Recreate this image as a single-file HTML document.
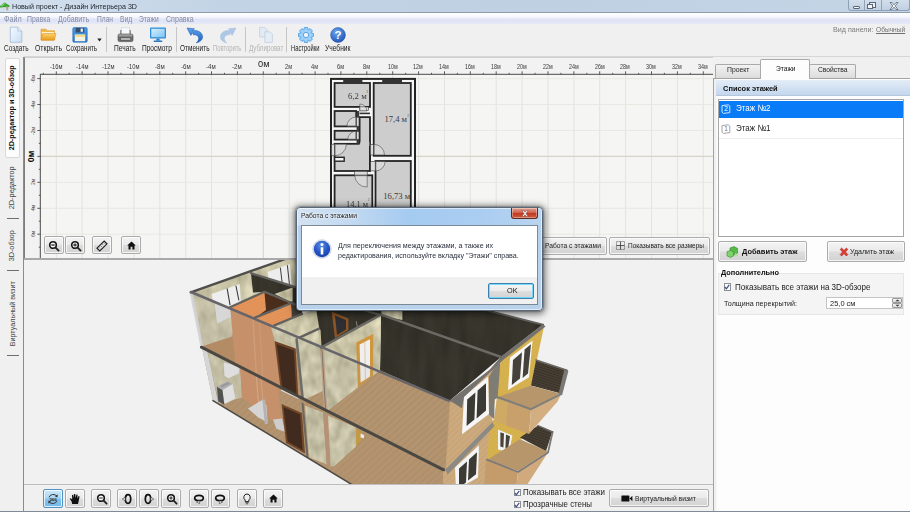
<!DOCTYPE html>
<html lang="ru">
<head>
<meta charset="utf-8">
<title>Новый проект - Дизайн Интерьера 3D</title>
<style>
*{box-sizing:border-box;margin:0;padding:0}
html,body{width:910px;height:512px;overflow:hidden;background:#f0f0f0}
body{font-family:"Liberation Sans",sans-serif;font-size:8px;color:#222;position:relative}
.abs{position:absolute}
.t{position:absolute;white-space:nowrap;transform-origin:0 50%}
#title{left:0;top:0;width:910px;height:12px;background:linear-gradient(90deg,#d3e0ee 0,#c2d3e5 25%,#bed0e2 60%,#c4d5e6 100%)}
#titleline{left:0;top:12px;width:910px;height:1px;background:#8e9cab}
#menu{left:0;top:13px;width:910px;height:11px;background:linear-gradient(180deg,#ffffff 0,#f6f7fd 35%,#dfe3f6 60%,#e4e8f7 100%)}
#toolbar{left:0;top:24px;width:910px;height:32px;background:#f0f0f0}
.btn{position:absolute;border:1px solid #ababab;border-radius:2px;background:linear-gradient(180deg,#f3f3f3 0,#eaeaea 48%,#dddddd 52%,#d2d2d2 100%);box-shadow:inset 0 0 0 1px rgba(255,255,255,.75)}
</style>
</head>
<body>
<div class="abs" id="title"></div>
<div class="abs" id="titleline"></div>
<div class="abs" id="menu"></div>
<div class="abs" id="toolbar"></div>
<!-- ===== ui_top ===== -->
<svg class="abs" style="left:0;top:0.9px" width="12" height="12" viewBox="0 0 12 12"><path d="M0 5 L4.5 1.5 L9.5 4.5 L9.5 6 L0 6.5Z" fill="#3fa535"/><path d="M1 4.6 L4.6 2 L4.6 3.2 L1.6 5.4Z" fill="#8fe070"/><rect x="6.2" y="5.5" width="2" height="3.8" fill="#b8a48c"/><rect x="3" y="6" width="1.4" height="2.4" fill="#d8d0c0"/></svg>
<span class="t" style="left:11.80px;top:2.90px;font-family:'Liberation Sans',sans-serif;font-size:7.4px;font-weight:normal;font-style:normal;color:#1b1f26;line-height:7.4px;transform:scaleX(0.9618);">Новый проект - Дизайн Интерьера 3D</span>
<div class="abs" style="left:847.50px;top:0.00px;width:62.50px;height:10.60px;border:1px solid #8fa0b4;border-top:none;border-radius:0 0 3px 3px;background:linear-gradient(180deg,#d2deeb,#c0d0e2)"></div>
<div class="abs" style="left:864.00px;top:0.00px;width:1.00px;height:10.00px;background:#93a3b6"></div>
<div class="abs" style="left:881.00px;top:0.00px;width:1.00px;height:10.00px;background:#93a3b6"></div>
<div class="abs" style="left:852.50px;top:6.00px;width:7.50px;height:2.60px;border:1px solid #5a6675;background:#f4f7fa;border-radius:1px"></div>
<div class="abs" style="left:868.50px;top:2.30px;width:7.00px;height:5.60px;border:1px solid #5a6675;background:#eef2f6"></div>
<div class="abs" style="left:867.20px;top:3.60px;width:6.00px;height:5.00px;border:1px solid #5a6675;background:#f4f7fa"></div>
<svg class="abs" style="left:889px;top:1.5px" width="10" height="8" viewBox="0 0 10 8"><path d="M1 0.5 L3 0.5 L5 2.8 L7 0.5 L9 0.5 L6.2 4 L9 7.5 L7 7.5 L5 5.2 L3 7.5 L1 7.5 L3.8 4Z" fill="#f2f5f8" stroke="#5a6675" stroke-width="0.8"/></svg>
<span class="t" style="left:3.80px;top:14.65px;font-family:'Liberation Sans',sans-serif;font-size:8.3px;font-weight:normal;font-style:normal;color:#838aa3;line-height:8.3px;transform:scaleX(0.8674);">Файл</span>
<span class="t" style="left:27.30px;top:14.65px;font-family:'Liberation Sans',sans-serif;font-size:8.3px;font-weight:normal;font-style:normal;color:#838aa3;line-height:8.3px;transform:scaleX(0.8276);">Правка</span>
<span class="t" style="left:58.00px;top:14.65px;font-family:'Liberation Sans',sans-serif;font-size:8.3px;font-weight:normal;font-style:normal;color:#838aa3;line-height:8.3px;transform:scaleX(0.8508);">Добавить</span>
<span class="t" style="left:96.50px;top:14.65px;font-family:'Liberation Sans',sans-serif;font-size:8.3px;font-weight:normal;font-style:normal;color:#838aa3;line-height:8.3px;transform:scaleX(0.7994);">План</span>
<span class="t" style="left:120.00px;top:14.65px;font-family:'Liberation Sans',sans-serif;font-size:8.3px;font-weight:normal;font-style:normal;color:#838aa3;line-height:8.3px;transform:scaleX(0.8125);">Вид</span>
<span class="t" style="left:139.00px;top:14.65px;font-family:'Liberation Sans',sans-serif;font-size:8.3px;font-weight:normal;font-style:normal;color:#838aa3;line-height:8.3px;transform:scaleX(0.8046);">Этажи</span>
<span class="t" style="left:165.50px;top:14.65px;font-family:'Liberation Sans',sans-serif;font-size:8.3px;font-weight:normal;font-style:normal;color:#838aa3;line-height:8.3px;transform:scaleX(0.8537);">Справка</span>
<span class="t" style="left:3.80px;top:44.15px;font-family:'Liberation Sans',sans-serif;font-size:8.5px;font-weight:normal;font-style:normal;color:#1c1c1c;line-height:8.5px;transform:scaleX(0.7644);">Создать</span>
<span class="t" style="left:35.00px;top:44.15px;font-family:'Liberation Sans',sans-serif;font-size:8.5px;font-weight:normal;font-style:normal;color:#1c1c1c;line-height:8.5px;transform:scaleX(0.8086);">Открыть</span>
<span class="t" style="left:66.00px;top:44.15px;font-family:'Liberation Sans',sans-serif;font-size:8.5px;font-weight:normal;font-style:normal;color:#1c1c1c;line-height:8.5px;transform:scaleX(0.7337);">Сохранить</span>
<span class="t" style="left:114.30px;top:44.15px;font-family:'Liberation Sans',sans-serif;font-size:8.5px;font-weight:normal;font-style:normal;color:#1c1c1c;line-height:8.5px;transform:scaleX(0.7789);">Печать</span>
<span class="t" style="left:142.00px;top:44.15px;font-family:'Liberation Sans',sans-serif;font-size:8.5px;font-weight:normal;font-style:normal;color:#1c1c1c;line-height:8.5px;transform:scaleX(0.7726);">Просмотр</span>
<span class="t" style="left:179.50px;top:44.15px;font-family:'Liberation Sans',sans-serif;font-size:8.5px;font-weight:normal;font-style:normal;color:#1c1c1c;line-height:8.5px;transform:scaleX(0.7595);">Отменить</span>
<span class="t" style="left:213.00px;top:44.15px;font-family:'Liberation Sans',sans-serif;font-size:8.5px;font-weight:normal;font-style:normal;color:#b4b4b4;line-height:8.5px;transform:scaleX(0.6843);">Повторить</span>
<span class="t" style="left:248.70px;top:44.15px;font-family:'Liberation Sans',sans-serif;font-size:8.5px;font-weight:normal;font-style:normal;color:#b4b4b4;line-height:8.5px;transform:scaleX(0.7330);">Дублироват</span>
<span class="t" style="left:291.00px;top:44.15px;font-family:'Liberation Sans',sans-serif;font-size:8.5px;font-weight:normal;font-style:normal;color:#1c1c1c;line-height:8.5px;transform:scaleX(0.6837);">Настройки</span>
<span class="t" style="left:324.50px;top:44.15px;font-family:'Liberation Sans',sans-serif;font-size:8.5px;font-weight:normal;font-style:normal;color:#1c1c1c;line-height:8.5px;transform:scaleX(0.7846);">Учебник</span>
<div class="abs" style="left:105.50px;top:27.00px;width:1.00px;height:25.00px;background:#c6c6c6"></div>
<div class="abs" style="left:175.50px;top:27.00px;width:1.00px;height:25.00px;background:#c6c6c6"></div>
<div class="abs" style="left:245.20px;top:27.00px;width:1.00px;height:25.00px;background:#c6c6c6"></div>
<div class="abs" style="left:286.10px;top:27.00px;width:1.00px;height:25.00px;background:#c6c6c6"></div>
<svg class="abs" style="left:97px;top:37.5px" width="5" height="4" viewBox="0 0 5 4"><path d="M0.3 0.5 L4.7 0.5 L2.5 3.5Z" fill="#222"/></svg>
<svg class="abs" style="left:8px;top:26px" width="16" height="18" viewBox="0 0 16 18"><defs><linearGradient id="gdoc" x1="0" y1="0" x2="1" y2="1"><stop offset="0" stop-color="#f4f9ff"/><stop offset="1" stop-color="#c9def5"/></linearGradient></defs><path d="M2.3 1.2 L9.8 1.2 L13.8 5 L13.8 16.3 L2.3 16.3Z" fill="url(#gdoc)" stroke="#a9c0dc" stroke-width="0.9"/><path d="M9.8 1.2 L9.8 5 L13.8 5" fill="#e6f0fb" stroke="#a9c0dc" stroke-width="0.8"/></svg>
<svg class="abs" style="left:40px;top:28px" width="17" height="14" viewBox="0 0 17 14"><defs><linearGradient id="gfol" x1="0" y1="0" x2="0" y2="1"><stop offset="0" stop-color="#fbd36a"/><stop offset="1" stop-color="#e99a1c"/></linearGradient></defs><path d="M1 1.2 L6 1.2 L7.3 2.8 L14.5 2.8 L14.5 12 L1 12Z" fill="#f3b948" stroke="#d9992a" stroke-width="0.6"/><path d="M1.8 4 L14 4 L14 6 L1.8 6Z" fill="#fdf3d2"/><path d="M2.8 5.5 L16 5.5 L14.3 12.2 L1 12.2Z" fill="url(#gfol)" stroke="#d48a1a" stroke-width="0.5"/></svg>
<svg class="abs" style="left:72px;top:27px" width="16" height="16" viewBox="0 0 16 16"><defs><linearGradient id="gfl" x1="0" y1="0" x2="0" y2="1"><stop offset="0" stop-color="#4b9de8"/><stop offset="1" stop-color="#2a78cc"/></linearGradient></defs><rect x="0.8" y="0.6" width="14.4" height="14.6" rx="1.2" fill="url(#gfl)" stroke="#2668b4" stroke-width="0.6"/><rect x="3.6" y="0.9" width="8.6" height="4.6" fill="#3a4e6c"/><rect x="8.6" y="1.5" width="2.3" height="3.3" fill="#e8eef6"/><rect x="2.8" y="7.6" width="10.4" height="6.6" fill="#f4f2e4"/><rect x="2.8" y="7.6" width="10.4" height="2.4" fill="#f6dc8a"/></svg>
<svg class="abs" style="left:117px;top:27px" width="17" height="16" viewBox="0 0 17 16"><rect x="4.6" y="0.8" width="7.8" height="7" fill="#f6f9fd" stroke="#c9d3df" stroke-width="0.6"/><rect x="3.4" y="3" width="0.9" height="4.4" fill="#5a5a5a"/><rect x="12.7" y="3" width="0.9" height="4.4" fill="#5a5a5a"/><rect x="1" y="7" width="15" height="7.6" rx="1.6" fill="#6d6d6d" stroke="#4a4a4a" stroke-width="0.6"/><rect x="1.4" y="7.3" width="14.2" height="2.2" rx="1" fill="#9c9c9c"/><rect x="3.6" y="11" width="9.8" height="2" fill="#d8d8d8" stroke="#444" stroke-width="0.5"/></svg>
<svg class="abs" style="left:149px;top:27px" width="18" height="16" viewBox="0 0 18 16"><defs><linearGradient id="gmon" x1="0" y1="0" x2="1" y2="1"><stop offset="0" stop-color="#d6efff"/><stop offset="1" stop-color="#7cc4f2"/></linearGradient></defs><rect x="1" y="0.6" width="16" height="11" rx="1" fill="#2f8fd8"/><rect x="2.3" y="1.8" width="13.4" height="8.4" fill="url(#gmon)"/><rect x="7.4" y="11.6" width="3.2" height="2" fill="#2a7fc6"/><rect x="4.6" y="13.4" width="8.8" height="1.5" rx="0.7" fill="#2878be"/></svg>
<svg class="abs" style="left:186px;top:27px" width="18" height="17" viewBox="0 0 18 17"><defs><linearGradient id="gun" x1="0" y1="0" x2="0" y2="1"><stop offset="0" stop-color="#5aa4ee"/><stop offset="1" stop-color="#1c5fc0"/></linearGradient></defs><path d="M1 1 L8.6 1.8 L6.4 3.6 C12 2.6 16.4 5.6 16.6 9.6 C16.8 12.6 14 15.4 10.2 15.8 C13 13.4 13.4 10.6 11.6 9 C10.2 7.8 8.6 7.6 7.4 8 L7 5.6 L4.8 8.4Z" fill="url(#gun)" stroke="#1d57ad" stroke-width="0.5"/></svg>
<svg class="abs" style="left:219px;top:27px" width="18" height="17" viewBox="0 0 18 17"><path d="M17 1 L9.4 1.8 L11.6 3.6 C6 2.6 1.6 5.6 1.4 9.6 C1.2 12.6 4 15.4 7.8 15.8 C5 13.4 4.6 10.6 6.4 9 C7.8 7.8 9.4 7.6 10.6 8 L11 5.6 L13.2 8.4Z" fill="#a9c6e6" stroke="#a2bddb" stroke-width="0.5" opacity="0.95"/></svg>
<svg class="abs" style="left:258px;top:26px" width="17" height="18" viewBox="0 0 17 18"><path d="M1.6 1.4 L6.6 1.4 L9 3.8 L9 11 L1.6 11Z" fill="#e2eaf4" stroke="#bccbe0" stroke-width="0.7"/><path d="M6.8 5.8 L11.8 5.8 L14.4 8.2 L14.4 16.4 L6.8 16.4Z" fill="#e4ecf6" stroke="#bccbe0" stroke-width="0.7"/></svg>
<svg class="abs" style="left:297.6px;top:27px" width="16" height="16" viewBox="0 0 16 16"><polygon points="15.43,6.42 15.43,9.58 13.22,10.03 13.12,10.26 14.38,12.14 12.14,14.38 10.26,13.12 10.03,13.22 9.58,15.43 6.42,15.43 5.97,13.22 5.74,13.12 3.86,14.38 1.62,12.14 2.88,10.26 2.78,10.03 0.57,9.58 0.57,6.42 2.78,5.97 2.88,5.74 1.62,3.86 3.86,1.62 5.74,2.88 5.97,2.78 6.42,0.57 9.58,0.57 10.03,2.78 10.26,2.88 12.14,1.62 14.38,3.86 13.12,5.74 13.22,5.97" fill="#9fd0f8" stroke="#4a9ee6" stroke-width="0.9" stroke-linejoin="round"/><circle cx="8" cy="8" r="2.7" fill="#f2f2f2" stroke="#4a9ee6" stroke-width="0.9"/></svg>
<svg class="abs" style="left:330px;top:27px" width="16" height="16" viewBox="0 0 16 16"><defs><radialGradient id="ghl" cx="0.4" cy="0.3" r="0.8"><stop offset="0" stop-color="#6aa6ee"/><stop offset="1" stop-color="#1a4fb2"/></radialGradient></defs><circle cx="8" cy="8" r="7.4" fill="url(#ghl)" stroke="#1a469c" stroke-width="0.5"/><text x="8" y="12" text-anchor="middle" font-family="Liberation Sans,sans-serif" font-weight="bold" font-size="11.5" fill="#fff">?</text></svg>
<span class="t" style="left:832.70px;top:26.30px;font-family:'Liberation Sans',sans-serif;font-size:7.4px;font-weight:normal;font-style:normal;color:#7c7c7c;line-height:7.4px;transform:scaleX(0.9646);">Вид панели:</span>
<span class="t" style="left:875.90px;top:26.30px;font-family:'Liberation Sans',sans-serif;font-size:7.4px;font-weight:normal;font-style:normal;color:#707070;line-height:7.4px;transform:scaleX(0.8937);text-decoration:underline;">Обычный</span>
<div class="abs" style="left:0.00px;top:56.20px;width:910.00px;height:1.00px;background:#d6d6d6"></div>
<!-- ===== ui_left ===== -->
<div class="abs" style="left:0.00px;top:56.00px;width:24.00px;height:456.00px;background:#f0f0f0"></div>
<div class="abs" style="left:4.80px;top:57.50px;width:15.20px;height:100.50px;background:#fdfdfd;border:1px solid #d9d9d9;border-radius:2px"></div>
<span class="t" style="left:-32.83px;top:103.70px;font-family:'Liberation Sans',sans-serif;font-size:7.6px;font-weight:bold;font-style:normal;color:#111;line-height:7.6px;transform:rotate(-90deg) scaleX(0.9438);transform-origin:50% 50%;">2D-редактор и 3D-обзор</span>
<span class="t" style="left:-10.01px;top:183.70px;font-family:'Liberation Sans',sans-serif;font-size:7.6px;font-weight:normal;font-style:normal;color:#444;line-height:7.6px;transform:rotate(-90deg) scaleX(0.9680);transform-origin:50% 50%;">2D-редактор</span>
<span class="t" style="left:-4.05px;top:241.70px;font-family:'Liberation Sans',sans-serif;font-size:7.6px;font-weight:normal;font-style:normal;color:#444;line-height:7.6px;transform:rotate(-90deg) scaleX(0.9538);transform-origin:50% 50%;">3D-обзор</span>
<span class="t" style="left:-22.17px;top:309.70px;font-family:'Liberation Sans',sans-serif;font-size:7.6px;font-weight:normal;font-style:normal;color:#444;line-height:7.6px;transform:rotate(-90deg) scaleX(0.9457);transform-origin:50% 50%;">Виртуальный визит</span>
<div class="abs" style="left:6.50px;top:217.80px;width:12.00px;height:1.00px;background:#6e6e6e"></div>
<div class="abs" style="left:6.50px;top:269.50px;width:12.00px;height:1.00px;background:#6e6e6e"></div>
<div class="abs" style="left:6.50px;top:354.50px;width:12.00px;height:1.00px;background:#6e6e6e"></div>
<!-- ===== ui_2d ===== -->
<div class="abs" style="left:23.50px;top:57.00px;width:689.50px;height:203.00px;background:#f2f2f2;border-left:1px solid #7d7d7d;border-top:1px solid #cfcfcf"></div>
<svg class="abs" style="left:24px;top:57px" width="689" height="203" viewBox="24 57 689 203"><rect x="40" y="74.5" width="673" height="185" fill="#f5f5f4"/><line x1="56.3" y1="75" x2="56.3" y2="259" stroke="#e3e1db" stroke-width="0.9"/><line x1="82.1" y1="75" x2="82.1" y2="259" stroke="#e3e1db" stroke-width="0.9"/><line x1="108.0" y1="75" x2="108.0" y2="259" stroke="#e3e1db" stroke-width="0.9"/><line x1="133.9" y1="75" x2="133.9" y2="259" stroke="#e3e1db" stroke-width="0.9"/><line x1="159.8" y1="75" x2="159.8" y2="259" stroke="#e3e1db" stroke-width="0.9"/><line x1="185.7" y1="75" x2="185.7" y2="259" stroke="#e3e1db" stroke-width="0.9"/><line x1="211.5" y1="75" x2="211.5" y2="259" stroke="#e3e1db" stroke-width="0.9"/><line x1="237.4" y1="75" x2="237.4" y2="259" stroke="#e3e1db" stroke-width="0.9"/><line x1="263.3" y1="75" x2="263.3" y2="259" stroke="#d8d6ce" stroke-width="1.2"/><line x1="289.2" y1="75" x2="289.2" y2="259" stroke="#e3e1db" stroke-width="0.9"/><line x1="315.1" y1="75" x2="315.1" y2="259" stroke="#e3e1db" stroke-width="0.9"/><line x1="340.9" y1="75" x2="340.9" y2="259" stroke="#e3e1db" stroke-width="0.9"/><line x1="366.8" y1="75" x2="366.8" y2="259" stroke="#e3e1db" stroke-width="0.9"/><line x1="392.7" y1="75" x2="392.7" y2="259" stroke="#e3e1db" stroke-width="0.9"/><line x1="418.6" y1="75" x2="418.6" y2="259" stroke="#e3e1db" stroke-width="0.9"/><line x1="444.5" y1="75" x2="444.5" y2="259" stroke="#e3e1db" stroke-width="0.9"/><line x1="470.3" y1="75" x2="470.3" y2="259" stroke="#e3e1db" stroke-width="0.9"/><line x1="496.2" y1="75" x2="496.2" y2="259" stroke="#e3e1db" stroke-width="0.9"/><line x1="522.1" y1="75" x2="522.1" y2="259" stroke="#e3e1db" stroke-width="0.9"/><line x1="548.0" y1="75" x2="548.0" y2="259" stroke="#e3e1db" stroke-width="0.9"/><line x1="573.9" y1="75" x2="573.9" y2="259" stroke="#e3e1db" stroke-width="0.9"/><line x1="599.7" y1="75" x2="599.7" y2="259" stroke="#e3e1db" stroke-width="0.9"/><line x1="625.6" y1="75" x2="625.6" y2="259" stroke="#e3e1db" stroke-width="0.9"/><line x1="651.5" y1="75" x2="651.5" y2="259" stroke="#e3e1db" stroke-width="0.9"/><line x1="677.4" y1="75" x2="677.4" y2="259" stroke="#e3e1db" stroke-width="0.9"/><line x1="703.3" y1="75" x2="703.3" y2="259" stroke="#e3e1db" stroke-width="0.9"/><line x1="40" y1="78.6" x2="713" y2="78.6" stroke="#e9e7e1" stroke-width="0.9"/><line x1="40" y1="104.5" x2="713" y2="104.5" stroke="#e9e7e1" stroke-width="0.9"/><line x1="40" y1="130.5" x2="713" y2="130.5" stroke="#e9e7e1" stroke-width="0.9"/><line x1="40" y1="156.4" x2="713" y2="156.4" stroke="#d6d3c8" stroke-width="1.4"/><line x1="40" y1="182.3" x2="713" y2="182.3" stroke="#e9e7e1" stroke-width="0.9"/><line x1="40" y1="208.3" x2="713" y2="208.3" stroke="#e9e7e1" stroke-width="0.9"/><line x1="40" y1="234.2" x2="713" y2="234.2" stroke="#e9e7e1" stroke-width="0.9"/><line x1="40" y1="74.3" x2="713" y2="74.3" stroke="#4a4a4a" stroke-width="1"/><line x1="40.3" y1="74" x2="40.3" y2="259" stroke="#4a4a4a" stroke-width="1"/><line x1="43.3" y1="72.8" x2="43.3" y2="74.5" stroke="#4a4a4a" stroke-width="0.9"/><line x1="56.3" y1="71.3" x2="56.3" y2="74.5" stroke="#4a4a4a" stroke-width="0.9"/><line x1="69.2" y1="72.8" x2="69.2" y2="74.5" stroke="#4a4a4a" stroke-width="0.9"/><line x1="82.1" y1="71.3" x2="82.1" y2="74.5" stroke="#4a4a4a" stroke-width="0.9"/><line x1="95.1" y1="72.8" x2="95.1" y2="74.5" stroke="#4a4a4a" stroke-width="0.9"/><line x1="108.0" y1="71.3" x2="108.0" y2="74.5" stroke="#4a4a4a" stroke-width="0.9"/><line x1="121.0" y1="72.8" x2="121.0" y2="74.5" stroke="#4a4a4a" stroke-width="0.9"/><line x1="133.9" y1="71.3" x2="133.9" y2="74.5" stroke="#4a4a4a" stroke-width="0.9"/><line x1="146.8" y1="72.8" x2="146.8" y2="74.5" stroke="#4a4a4a" stroke-width="0.9"/><line x1="159.8" y1="71.3" x2="159.8" y2="74.5" stroke="#4a4a4a" stroke-width="0.9"/><line x1="172.7" y1="72.8" x2="172.7" y2="74.5" stroke="#4a4a4a" stroke-width="0.9"/><line x1="185.7" y1="71.3" x2="185.7" y2="74.5" stroke="#4a4a4a" stroke-width="0.9"/><line x1="198.6" y1="72.8" x2="198.6" y2="74.5" stroke="#4a4a4a" stroke-width="0.9"/><line x1="211.5" y1="71.3" x2="211.5" y2="74.5" stroke="#4a4a4a" stroke-width="0.9"/><line x1="224.5" y1="72.8" x2="224.5" y2="74.5" stroke="#4a4a4a" stroke-width="0.9"/><line x1="237.4" y1="71.3" x2="237.4" y2="74.5" stroke="#4a4a4a" stroke-width="0.9"/><line x1="250.4" y1="72.8" x2="250.4" y2="74.5" stroke="#4a4a4a" stroke-width="0.9"/><line x1="263.3" y1="71.3" x2="263.3" y2="74.5" stroke="#4a4a4a" stroke-width="0.9"/><line x1="276.2" y1="72.8" x2="276.2" y2="74.5" stroke="#4a4a4a" stroke-width="0.9"/><line x1="289.2" y1="71.3" x2="289.2" y2="74.5" stroke="#4a4a4a" stroke-width="0.9"/><line x1="302.1" y1="72.8" x2="302.1" y2="74.5" stroke="#4a4a4a" stroke-width="0.9"/><line x1="315.1" y1="71.3" x2="315.1" y2="74.5" stroke="#4a4a4a" stroke-width="0.9"/><line x1="328.0" y1="72.8" x2="328.0" y2="74.5" stroke="#4a4a4a" stroke-width="0.9"/><line x1="340.9" y1="71.3" x2="340.9" y2="74.5" stroke="#4a4a4a" stroke-width="0.9"/><line x1="353.9" y1="72.8" x2="353.9" y2="74.5" stroke="#4a4a4a" stroke-width="0.9"/><line x1="366.8" y1="71.3" x2="366.8" y2="74.5" stroke="#4a4a4a" stroke-width="0.9"/><line x1="379.8" y1="72.8" x2="379.8" y2="74.5" stroke="#4a4a4a" stroke-width="0.9"/><line x1="392.7" y1="71.3" x2="392.7" y2="74.5" stroke="#4a4a4a" stroke-width="0.9"/><line x1="405.6" y1="72.8" x2="405.6" y2="74.5" stroke="#4a4a4a" stroke-width="0.9"/><line x1="418.6" y1="71.3" x2="418.6" y2="74.5" stroke="#4a4a4a" stroke-width="0.9"/><line x1="431.5" y1="72.8" x2="431.5" y2="74.5" stroke="#4a4a4a" stroke-width="0.9"/><line x1="444.5" y1="71.3" x2="444.5" y2="74.5" stroke="#4a4a4a" stroke-width="0.9"/><line x1="457.4" y1="72.8" x2="457.4" y2="74.5" stroke="#4a4a4a" stroke-width="0.9"/><line x1="470.3" y1="71.3" x2="470.3" y2="74.5" stroke="#4a4a4a" stroke-width="0.9"/><line x1="483.3" y1="72.8" x2="483.3" y2="74.5" stroke="#4a4a4a" stroke-width="0.9"/><line x1="496.2" y1="71.3" x2="496.2" y2="74.5" stroke="#4a4a4a" stroke-width="0.9"/><line x1="509.2" y1="72.8" x2="509.2" y2="74.5" stroke="#4a4a4a" stroke-width="0.9"/><line x1="522.1" y1="71.3" x2="522.1" y2="74.5" stroke="#4a4a4a" stroke-width="0.9"/><line x1="535.0" y1="72.8" x2="535.0" y2="74.5" stroke="#4a4a4a" stroke-width="0.9"/><line x1="548.0" y1="71.3" x2="548.0" y2="74.5" stroke="#4a4a4a" stroke-width="0.9"/><line x1="560.9" y1="72.8" x2="560.9" y2="74.5" stroke="#4a4a4a" stroke-width="0.9"/><line x1="573.9" y1="71.3" x2="573.9" y2="74.5" stroke="#4a4a4a" stroke-width="0.9"/><line x1="586.8" y1="72.8" x2="586.8" y2="74.5" stroke="#4a4a4a" stroke-width="0.9"/><line x1="599.7" y1="71.3" x2="599.7" y2="74.5" stroke="#4a4a4a" stroke-width="0.9"/><line x1="612.7" y1="72.8" x2="612.7" y2="74.5" stroke="#4a4a4a" stroke-width="0.9"/><line x1="625.6" y1="71.3" x2="625.6" y2="74.5" stroke="#4a4a4a" stroke-width="0.9"/><line x1="638.6" y1="72.8" x2="638.6" y2="74.5" stroke="#4a4a4a" stroke-width="0.9"/><line x1="651.5" y1="71.3" x2="651.5" y2="74.5" stroke="#4a4a4a" stroke-width="0.9"/><line x1="664.4" y1="72.8" x2="664.4" y2="74.5" stroke="#4a4a4a" stroke-width="0.9"/><line x1="677.4" y1="71.3" x2="677.4" y2="74.5" stroke="#4a4a4a" stroke-width="0.9"/><line x1="690.3" y1="72.8" x2="690.3" y2="74.5" stroke="#4a4a4a" stroke-width="0.9"/><line x1="703.3" y1="71.3" x2="703.3" y2="74.5" stroke="#4a4a4a" stroke-width="0.9"/><line x1="37.3" y1="78.6" x2="40.5" y2="78.6" stroke="#4a4a4a" stroke-width="0.9"/><line x1="38.8" y1="91.5" x2="40.5" y2="91.5" stroke="#4a4a4a" stroke-width="0.9"/><line x1="37.3" y1="104.5" x2="40.5" y2="104.5" stroke="#4a4a4a" stroke-width="0.9"/><line x1="38.8" y1="117.5" x2="40.5" y2="117.5" stroke="#4a4a4a" stroke-width="0.9"/><line x1="37.3" y1="130.5" x2="40.5" y2="130.5" stroke="#4a4a4a" stroke-width="0.9"/><line x1="38.8" y1="143.4" x2="40.5" y2="143.4" stroke="#4a4a4a" stroke-width="0.9"/><line x1="37.3" y1="156.4" x2="40.5" y2="156.4" stroke="#4a4a4a" stroke-width="0.9"/><line x1="38.8" y1="169.4" x2="40.5" y2="169.4" stroke="#4a4a4a" stroke-width="0.9"/><line x1="37.3" y1="182.3" x2="40.5" y2="182.3" stroke="#4a4a4a" stroke-width="0.9"/><line x1="38.8" y1="195.3" x2="40.5" y2="195.3" stroke="#4a4a4a" stroke-width="0.9"/><line x1="37.3" y1="208.3" x2="40.5" y2="208.3" stroke="#4a4a4a" stroke-width="0.9"/><line x1="38.8" y1="221.2" x2="40.5" y2="221.2" stroke="#4a4a4a" stroke-width="0.9"/><line x1="37.3" y1="234.2" x2="40.5" y2="234.2" stroke="#4a4a4a" stroke-width="0.9"/><line x1="38.8" y1="247.2" x2="40.5" y2="247.2" stroke="#4a4a4a" stroke-width="0.9"/></svg>
<span class="t" style="left:49.76px;top:64.40px;font-family:'Liberation Sans',sans-serif;font-size:6.8px;font-weight:normal;font-style:normal;color:#383838;line-height:6.8px;transform:scaleX(0.8552);">-16м</span>
<span class="t" style="left:75.64px;top:64.40px;font-family:'Liberation Sans',sans-serif;font-size:6.8px;font-weight:normal;font-style:normal;color:#383838;line-height:6.8px;transform:scaleX(0.8552);">-14м</span>
<span class="t" style="left:101.52px;top:64.40px;font-family:'Liberation Sans',sans-serif;font-size:6.8px;font-weight:normal;font-style:normal;color:#383838;line-height:6.8px;transform:scaleX(0.8552);">-12м</span>
<span class="t" style="left:127.40px;top:64.40px;font-family:'Liberation Sans',sans-serif;font-size:6.8px;font-weight:normal;font-style:normal;color:#383838;line-height:6.8px;transform:scaleX(0.8552);">-10м</span>
<span class="t" style="left:154.63px;top:64.40px;font-family:'Liberation Sans',sans-serif;font-size:6.8px;font-weight:normal;font-style:normal;color:#383838;line-height:6.8px;transform:scaleX(0.9050);">-8м</span>
<span class="t" style="left:180.51px;top:64.40px;font-family:'Liberation Sans',sans-serif;font-size:6.8px;font-weight:normal;font-style:normal;color:#383838;line-height:6.8px;transform:scaleX(0.9050);">-6м</span>
<span class="t" style="left:206.39px;top:64.40px;font-family:'Liberation Sans',sans-serif;font-size:6.8px;font-weight:normal;font-style:normal;color:#383838;line-height:6.8px;transform:scaleX(0.9050);">-4м</span>
<span class="t" style="left:232.27px;top:64.40px;font-family:'Liberation Sans',sans-serif;font-size:6.8px;font-weight:normal;font-style:normal;color:#383838;line-height:6.8px;transform:scaleX(0.9050);">-2м</span>
<span class="t" style="left:257.70px;top:60.10px;font-family:'Liberation Sans',sans-serif;font-size:9px;font-weight:normal;font-style:normal;color:#222;line-height:9px;transform:scaleX(1.0265);">0м</span>
<span class="t" style="left:285.38px;top:64.40px;font-family:'Liberation Sans',sans-serif;font-size:6.8px;font-weight:normal;font-style:normal;color:#383838;line-height:6.8px;transform:scaleX(0.8281);">2м</span>
<span class="t" style="left:311.26px;top:64.40px;font-family:'Liberation Sans',sans-serif;font-size:6.8px;font-weight:normal;font-style:normal;color:#383838;line-height:6.8px;transform:scaleX(0.8281);">4м</span>
<span class="t" style="left:337.14px;top:64.40px;font-family:'Liberation Sans',sans-serif;font-size:6.8px;font-weight:normal;font-style:normal;color:#383838;line-height:6.8px;transform:scaleX(0.8281);">6м</span>
<span class="t" style="left:363.02px;top:64.40px;font-family:'Liberation Sans',sans-serif;font-size:6.8px;font-weight:normal;font-style:normal;color:#383838;line-height:6.8px;transform:scaleX(0.8281);">8м</span>
<span class="t" style="left:387.55px;top:64.40px;font-family:'Liberation Sans',sans-serif;font-size:6.8px;font-weight:normal;font-style:normal;color:#383838;line-height:6.8px;transform:scaleX(0.7928);">10м</span>
<span class="t" style="left:413.43px;top:64.40px;font-family:'Liberation Sans',sans-serif;font-size:6.8px;font-weight:normal;font-style:normal;color:#383838;line-height:6.8px;transform:scaleX(0.7928);">12м</span>
<span class="t" style="left:439.31px;top:64.40px;font-family:'Liberation Sans',sans-serif;font-size:6.8px;font-weight:normal;font-style:normal;color:#383838;line-height:6.8px;transform:scaleX(0.7928);">14м</span>
<span class="t" style="left:465.19px;top:64.40px;font-family:'Liberation Sans',sans-serif;font-size:6.8px;font-weight:normal;font-style:normal;color:#383838;line-height:6.8px;transform:scaleX(0.7928);">16м</span>
<span class="t" style="left:491.07px;top:64.40px;font-family:'Liberation Sans',sans-serif;font-size:6.8px;font-weight:normal;font-style:normal;color:#383838;line-height:6.8px;transform:scaleX(0.7928);">18м</span>
<span class="t" style="left:516.95px;top:64.40px;font-family:'Liberation Sans',sans-serif;font-size:6.8px;font-weight:normal;font-style:normal;color:#383838;line-height:6.8px;transform:scaleX(0.7928);">20м</span>
<span class="t" style="left:542.83px;top:64.40px;font-family:'Liberation Sans',sans-serif;font-size:6.8px;font-weight:normal;font-style:normal;color:#383838;line-height:6.8px;transform:scaleX(0.7928);">22м</span>
<span class="t" style="left:568.71px;top:64.40px;font-family:'Liberation Sans',sans-serif;font-size:6.8px;font-weight:normal;font-style:normal;color:#383838;line-height:6.8px;transform:scaleX(0.7928);">24м</span>
<span class="t" style="left:594.59px;top:64.40px;font-family:'Liberation Sans',sans-serif;font-size:6.8px;font-weight:normal;font-style:normal;color:#383838;line-height:6.8px;transform:scaleX(0.7928);">26м</span>
<span class="t" style="left:620.47px;top:64.40px;font-family:'Liberation Sans',sans-serif;font-size:6.8px;font-weight:normal;font-style:normal;color:#383838;line-height:6.8px;transform:scaleX(0.7928);">28м</span>
<span class="t" style="left:646.35px;top:64.40px;font-family:'Liberation Sans',sans-serif;font-size:6.8px;font-weight:normal;font-style:normal;color:#383838;line-height:6.8px;transform:scaleX(0.7928);">30м</span>
<span class="t" style="left:672.23px;top:64.40px;font-family:'Liberation Sans',sans-serif;font-size:6.8px;font-weight:normal;font-style:normal;color:#383838;line-height:6.8px;transform:scaleX(0.7928);">32м</span>
<span class="t" style="left:698.11px;top:64.40px;font-family:'Liberation Sans',sans-serif;font-size:6.8px;font-weight:normal;font-style:normal;color:#383838;line-height:6.8px;transform:scaleX(0.7928);">34м</span>
<span class="t" style="left:28.63px;top:75.68px;font-family:'Liberation Sans',sans-serif;font-size:5.8px;font-weight:normal;font-style:normal;color:#444;line-height:5.8px;transform:rotate(-90deg) scaleX(0.8752);transform-origin:50% 50%;">-6м</span>
<span class="t" style="left:28.63px;top:101.62px;font-family:'Liberation Sans',sans-serif;font-size:5.8px;font-weight:normal;font-style:normal;color:#444;line-height:5.8px;transform:rotate(-90deg) scaleX(0.8752);transform-origin:50% 50%;">-4м</span>
<span class="t" style="left:28.63px;top:127.56px;font-family:'Liberation Sans',sans-serif;font-size:5.8px;font-weight:normal;font-style:normal;color:#444;line-height:5.8px;transform:rotate(-90deg) scaleX(0.8752);transform-origin:50% 50%;">-2м</span>
<span class="t" style="left:26.36px;top:151.90px;font-family:'Liberation Sans',sans-serif;font-size:9px;font-weight:bold;font-style:normal;color:#111;line-height:9px;transform:rotate(-90deg) scaleX(0.9853);transform-origin:50% 50%;">0м</span>
<span class="t" style="left:29.59px;top:179.44px;font-family:'Liberation Sans',sans-serif;font-size:5.8px;font-weight:normal;font-style:normal;color:#444;line-height:5.8px;transform:rotate(-90deg) scaleX(0.8035);transform-origin:50% 50%;">2м</span>
<span class="t" style="left:29.59px;top:205.38px;font-family:'Liberation Sans',sans-serif;font-size:5.8px;font-weight:normal;font-style:normal;color:#444;line-height:5.8px;transform:rotate(-90deg) scaleX(0.8035);transform-origin:50% 50%;">4м</span>
<span class="t" style="left:29.59px;top:231.32px;font-family:'Liberation Sans',sans-serif;font-size:5.8px;font-weight:normal;font-style:normal;color:#444;line-height:5.8px;transform:rotate(-90deg) scaleX(0.8035);transform-origin:50% 50%;">6м</span>
<svg class="abs" style="left:320px;top:74px" width="110" height="186" viewBox="320 74 110 186"><rect x="331" y="78.9" width="84" height="182" fill="#f6f6f6" stroke="#242424" stroke-width="2.0"/><rect x="334.6" y="83" width="35.4" height="23.9" fill="#cdcdcd" stroke="#242424" stroke-width="1.8"/><rect x="373.7" y="83" width="37.1" height="72.8" fill="#cdcdcd" stroke="#242424" stroke-width="1.8"/><rect x="334.6" y="111" width="21.6" height="15.4" fill="#cdcdcd" stroke="#242424" stroke-width="1.8"/><rect x="334.6" y="130.8" width="21.6" height="8.8" fill="#cdcdcd" stroke="#242424" stroke-width="1.8"/><rect x="334.6" y="143.8" width="35.4" height="27.2" fill="#cdcdcd" stroke="#242424" stroke-width="1.8"/><rect x="359.6" y="117.2" width="10.4" height="27.8" fill="#cdcdcd"/><rect x="334.6" y="175.3" width="37.7" height="86.7" fill="#cdcdcd" stroke="#242424" stroke-width="1.8"/><rect x="375.5" y="161" width="35.3" height="101.0" fill="#cdcdcd" stroke="#242424" stroke-width="1.8"/><path d="M359.6 143.8 L359.6 117.2 L370 117.2 L370 171" fill="none" stroke="#242424" stroke-width="1.8"/><rect x="360.3" y="142" width="9" height="4" fill="#cdcdcd"/><rect x="356.6" y="111" width="2.6" height="32.8" fill="#3a3a3a"/><rect x="343.2" y="79.4" width="19.2" height="3.4" fill="#333"/><rect x="382.2" y="79.4" width="19.8" height="3.4" fill="#333"/><rect x="359.8" y="107" width="8.6" height="3.6" fill="#dcdcdc" stroke="#333" stroke-width="0.6"/><path d="M359.8 104 A7 7 0 0 1 366.8 111 L359.8 111Z" fill="#e2e2e2" fill-opacity="0.55" stroke="#444" stroke-width="0.55"/><rect x="359.6" y="112.6" width="10.4" height="1.6" fill="#333"/><rect x="356.4" y="117.2" width="2.6" height="9" fill="#dcdcdc" stroke="#333" stroke-width="0.6"/><path d="M356.2 117 A9.3 9.3 0 0 0 346.9 126.3 L356.2 126.3Z" fill="#e2e2e2" fill-opacity="0.55" stroke="#444" stroke-width="0.55"/><rect x="356.4" y="131.4" width="2.6" height="8" fill="#dcdcdc" stroke="#333" stroke-width="0.6"/><path d="M356.2 131.2 A8.4 8.4 0 0 0 347.8 139.6 L356.2 139.6Z" fill="#e2e2e2" fill-opacity="0.55" stroke="#444" stroke-width="0.55"/><rect x="331.4" y="144.2" width="3" height="11.6" fill="#dcdcdc" stroke="#333" stroke-width="0.6"/><path d="M334.7 155.8 A11.7 11.7 0 0 0 346.4 144.1 L334.7 144.1Z" fill="#e2e2e2" fill-opacity="0.55" stroke="#444" stroke-width="0.55"/><rect x="370.3" y="144.6" width="3.2" height="10.4" fill="#dcdcdc" stroke="#333" stroke-width="0.6"/><path d="M373.9 144.4 A10.6 10.6 0 0 1 384.5 155 L373.9 155Z" fill="#e2e2e2" fill-opacity="0.55" stroke="#444" stroke-width="0.55"/><rect x="370.6" y="161.3" width="4.6" height="9.6" fill="#dcdcdc" stroke="#333" stroke-width="0.6"/><path d="M375.5 171 A9.6 9.6 0 0 0 385.1 161.4 L375.5 161.4Z" fill="#e2e2e2" fill-opacity="0.55" stroke="#444" stroke-width="0.55"/><rect x="354.7" y="171.3" width="12.5" height="3.8" fill="#dcdcdc" stroke="#333" stroke-width="0.6"/><path d="M367.2 187 A12 12 0 0 1 354.7 175.3 L367.2 175.3Z" fill="#e2e2e2" fill-opacity="0.55" stroke="#444" stroke-width="0.55"/><rect x="334.6" y="157.3" width="9.6" height="3.9" fill="#f6f6f6" stroke="#242424" stroke-width="1.4"/></svg>
<span class="t" style="left:347.70px;top:91.90px;font-family:'Liberation Serif',serif;font-size:8.6px;font-weight:normal;font-style:normal;color:#3a3a3a;line-height:8.6px;transform:scaleX(1.0194);">6,2 м</span>
<span class="t" style="left:384.40px;top:115.30px;font-family:'Liberation Serif',serif;font-size:8.6px;font-weight:normal;font-style:normal;color:#3a3a3a;line-height:8.6px;">17,4 м</span>
<span class="t" style="left:345.80px;top:199.90px;font-family:'Liberation Serif',serif;font-size:8.6px;font-weight:normal;font-style:normal;color:#3a3a3a;line-height:8.6px;transform:scaleX(0.9717);">14,1 м</span>
<span class="t" style="left:383.30px;top:191.70px;font-family:'Liberation Serif',serif;font-size:8.6px;font-weight:normal;font-style:normal;color:#3a3a3a;line-height:8.6px;">16,73 м</span>
<span class="t" style="left:366.60px;top:90.10px;font-family:'Liberation Serif',serif;font-size:5px;font-weight:normal;font-style:normal;color:#555;line-height:5px;">²</span>
<span class="t" style="left:407.20px;top:113.50px;font-family:'Liberation Serif',serif;font-size:5px;font-weight:normal;font-style:normal;color:#555;line-height:5px;">²</span>
<span class="t" style="left:368.00px;top:197.90px;font-family:'Liberation Serif',serif;font-size:5px;font-weight:normal;font-style:normal;color:#555;line-height:5px;">²</span>
<span class="t" style="left:410.40px;top:189.90px;font-family:'Liberation Serif',serif;font-size:5px;font-weight:normal;font-style:normal;color:#555;line-height:5px;">²</span>
<div class="btn" style="left:43.6px;top:236.2px;width:20px;height:18.3px"></div>
<div class="btn" style="left:65.4px;top:236.2px;width:20px;height:18.3px"></div>
<div class="btn" style="left:92.2px;top:236.2px;width:20.3px;height:18.3px"></div>
<div class="btn" style="left:121px;top:236.2px;width:20px;height:18.3px"></div>
<svg class="abs" style="left:48px;top:239.6px" width="12" height="12" viewBox="0 0 12 12"><circle cx="5" cy="5" r="3.3" fill="#fafafa" stroke="#151515" stroke-width="1.6"/><line x1="7.4" y1="7.4" x2="10.6" y2="10.6" stroke="#222" stroke-width="1.8" stroke-linecap="round"/><line x1="3.3" y1="5" x2="6.7" y2="5" stroke="#222" stroke-width="1.3"/></svg>
<svg class="abs" style="left:69.6px;top:239.6px" width="12" height="12" viewBox="0 0 12 12"><circle cx="5" cy="5" r="3.3" fill="#fafafa" stroke="#151515" stroke-width="1.6"/><line x1="7.4" y1="7.4" x2="10.6" y2="10.6" stroke="#222" stroke-width="1.8" stroke-linecap="round"/><line x1="3.3" y1="5" x2="6.7" y2="5" stroke="#222" stroke-width="1.3"/><line x1="5" y1="3.3" x2="5" y2="6.7" stroke="#222" stroke-width="1"/></svg>
<svg class="abs" style="left:96px;top:239.5px" width="12" height="12" viewBox="0 0 12 12"><path d="M1 8.2 L8.2 1 L11 3.8 L3.8 11Z" fill="#e6e6e6" stroke="#222" stroke-width="1.2"/><path d="M3.2 7.4l1 1M4.8 5.8l1.2 1.2M6.4 4.2l1 1M8 2.6l1.2 1.2" stroke="#333" stroke-width="0.6"/></svg>
<svg class="abs" style="left:126.5px;top:241px" width="9" height="9" viewBox="0 0 9 9"><path d="M4.5 0.6 L8.8 4.6 L7.5 4.6 L7.5 8.4 L5.4 8.4 L5.4 5.8 L3.6 5.8 L3.6 8.4 L1.5 8.4 L1.5 4.6 L0.2 4.6Z" fill="#111"/></svg>
<div class="btn" style="left:528px;top:236.6px;width:79px;height:18px"></div>
<div class="btn" style="left:608.7px;top:236.6px;width:101px;height:18px"></div>
<span class="t" style="left:545.00px;top:242.20px;font-family:'Liberation Sans',sans-serif;font-size:7px;font-weight:normal;font-style:normal;color:#222;line-height:7px;transform:scaleX(0.9616);">Работа с этажами</span>
<svg class="abs" style="left:615.5px;top:241px" width="9" height="9" viewBox="0 0 9 9"><rect x="0.5" y="0.5" width="8" height="8" fill="none" stroke="#444" stroke-width="0.7" stroke-dasharray="1.2 0.8"/><path d="M4.5 0.5V8.5M0.5 4.5H8.5" stroke="#333" stroke-width="0.8"/></svg>
<span class="t" style="left:627.50px;top:242.20px;font-family:'Liberation Sans',sans-serif;font-size:7px;font-weight:normal;font-style:normal;color:#222;line-height:7px;transform:scaleX(0.9279);">Показывать все размеры</span>
<div class="abs" style="left:24.00px;top:258.20px;width:689.00px;height:2.20px;background:#a9a9a9"></div>
<!-- ===== ui_bottom ===== -->
<div class="abs" style="left:24.00px;top:260.40px;width:689.00px;height:223.60px;background:#f1f1f1"></div>
<div class="abs" style="left:23.10px;top:57.00px;width:1.30px;height:455.00px;background:#8c8c8c"></div>
<div class="abs" style="left:24.00px;top:483.60px;width:689.00px;height:1.00px;background:#bdbdbd"></div>
<div class="abs" style="left:24.00px;top:484.60px;width:689.00px;height:27.40px;background:#f0f0f0"></div>
<div class="btn" style="left:43.4px;top:488.8px;width:20px;height:19.4px;background:linear-gradient(180deg,#cfe8f8 0,#a9d6f2 48%,#86c4ec 52%,#72b9e8 100%);border-color:#4f93c4"></div>
<div class="btn" style="left:65px;top:488.8px;width:20px;height:19.4px"></div>
<div class="btn" style="left:91.4px;top:488.8px;width:20px;height:19.4px"></div>
<div class="btn" style="left:116.6px;top:488.8px;width:20px;height:19.4px"></div>
<div class="btn" style="left:138.6px;top:488.8px;width:20px;height:19.4px"></div>
<div class="btn" style="left:161.4px;top:488.8px;width:20px;height:19.4px"></div>
<div class="btn" style="left:188.6px;top:488.8px;width:20px;height:19.4px"></div>
<div class="btn" style="left:210.6px;top:488.8px;width:19.6px;height:19.4px"></div>
<div class="btn" style="left:237px;top:488.8px;width:19.6px;height:19.4px"></div>
<div class="btn" style="left:263.4px;top:488.8px;width:20px;height:19.4px"></div>
<svg class="abs" style="left:47.4px;top:492.6px" width="12" height="12" viewBox="0 0 12 12"><path d="M2 4.4 A4.4 4 0 0 1 10 3.4 M10 7.6 A4.4 4 0 0 1 2 8.6" fill="none" stroke="#333" stroke-width="1"/><path d="M10.8 1.4 L10.4 4.4 L7.8 3.2Z M1.2 10.6 L1.6 7.6 L4.2 8.8Z" fill="#333"/><text x="6" y="7.6" text-anchor="middle" font-family="Liberation Sans,sans-serif" font-size="4.2" font-weight="bold" fill="#222">360</text></svg>
<svg class="abs" style="left:69.4px;top:492.6px" width="12" height="12" viewBox="0 0 12 12"><path d="M3.2 11 L2.6 8.4 L0.8 5.8 L1.8 5.2 L3.2 6.6 L3 2 L4.2 1.8 L4.8 5 L5 1 L6.3 1 L6.6 5 L7.4 1.6 L8.6 1.8 L8.4 5.4 L9.6 3 L10.6 3.4 L9.8 7.6 L9 11Z" fill="#111"/></svg>
<svg class="abs" style="left:95.6px;top:492.6px" width="12" height="12" viewBox="0 0 12 12"><circle cx="5" cy="5" r="3.3" fill="#fafafa" stroke="#151515" stroke-width="1.6"/><line x1="7.4" y1="7.4" x2="10.6" y2="10.6" stroke="#222" stroke-width="1.8" stroke-linecap="round"/><line x1="3.3" y1="5" x2="6.7" y2="5" stroke="#222" stroke-width="1"/></svg>
<svg class="abs" style="left:165.6px;top:492.6px" width="12" height="12" viewBox="0 0 12 12"><circle cx="5" cy="5" r="3.3" fill="#fafafa" stroke="#151515" stroke-width="1.6"/><line x1="7.4" y1="7.4" x2="10.6" y2="10.6" stroke="#222" stroke-width="1.8" stroke-linecap="round"/><line x1="3.3" y1="5" x2="6.7" y2="5" stroke="#222" stroke-width="1"/><line x1="5" y1="3.3" x2="5" y2="6.7" stroke="#222" stroke-width="1"/></svg>
<svg class="abs" style="left:121px;top:492.6px" width="12" height="12" viewBox="0 0 12 12"><ellipse cx="7" cy="6" rx="2.7" ry="4.3" fill="none" stroke="#111" stroke-width="1.7"/><path d="M1.2 6 L4.2 4.2 L4.2 7.8Z" fill="#f4f4f4" stroke="#333" stroke-width="0.6"/></svg>
<svg class="abs" style="left:143px;top:492.6px" width="12" height="12" viewBox="0 0 12 12"><ellipse cx="5" cy="6" rx="2.7" ry="4.3" fill="none" stroke="#111" stroke-width="1.7"/><path d="M10.8 6 L7.8 4.2 L7.8 7.8Z" fill="#f4f4f4" stroke="#333" stroke-width="0.6"/></svg>
<svg class="abs" style="left:192.6px;top:492.6px" width="12" height="12" viewBox="0 0 12 12"><ellipse cx="6" cy="5" rx="4.3" ry="2.7" fill="none" stroke="#111" stroke-width="1.7"/><path d="M3.4 9 L6.6 7.4 L6.6 10.6Z" fill="#f4f4f4" stroke="#333" stroke-width="0.6"/></svg>
<svg class="abs" style="left:214.4px;top:492.6px" width="12" height="12" viewBox="0 0 12 12"><ellipse cx="6" cy="5" rx="4.3" ry="2.7" fill="none" stroke="#111" stroke-width="1.7"/><path d="M8.6 9 L5.4 7.4 L5.4 10.6Z" fill="#f4f4f4" stroke="#333" stroke-width="0.6"/></svg>
<svg class="abs" style="left:241.8px;top:492.6px" width="10" height="12" viewBox="0 0 10 12"><path d="M5 1 A3.3 3.3 0 0 1 6.8 7 L6.8 8.6 L3.2 8.6 L3.2 7 A3.3 3.3 0 0 1 5 1Z" fill="#f0f0f0" stroke="#222" stroke-width="1.0"/><path d="M3.4 9.6 H6.6 M3.8 10.8 H6.2" stroke="#333" stroke-width="0.8"/></svg>
<svg class="abs" style="left:268.9px;top:494.0px" width="9" height="9" viewBox="0 0 9 9"><path d="M4.5 0.6 L8.8 4.6 L7.5 4.6 L7.5 8.4 L5.4 8.4 L5.4 5.8 L3.6 5.8 L3.6 8.4 L1.5 8.4 L1.5 4.6 L0.2 4.6Z" fill="#111"/></svg>
<div class="abs" style="left:513.60px;top:489.00px;width:7.20px;height:7.20px;background:#fdfdfd;border:1px solid #8e8f8f"></div>
<svg class="abs" style="left:514.2px;top:489.6px" width="6" height="6" viewBox="0 0 6 6"><path d="M0.8 3 L2.4 4.8 L5.2 0.8" fill="none" stroke="#3b4a8c" stroke-width="1.2"/></svg>
<div class="abs" style="left:513.60px;top:501.00px;width:7.20px;height:7.20px;background:#fdfdfd;border:1px solid #8e8f8f"></div>
<svg class="abs" style="left:514.2px;top:501.6px" width="6" height="6" viewBox="0 0 6 6"><path d="M0.8 3 L2.4 4.8 L5.2 0.8" fill="none" stroke="#3b4a8c" stroke-width="1.2"/></svg>
<span class="t" style="left:522.90px;top:488.40px;font-family:'Liberation Sans',sans-serif;font-size:8.8px;font-weight:normal;font-style:normal;color:#222;line-height:8.8px;transform:scaleX(0.9014);">Показывать все этажи</span>
<span class="t" style="left:522.90px;top:500.40px;font-family:'Liberation Sans',sans-serif;font-size:8.8px;font-weight:normal;font-style:normal;color:#222;line-height:8.8px;transform:scaleX(0.8945);">Прозрачные стены</span>
<div class="btn" style="left:608.6px;top:488.9px;width:100px;height:18.6px"></div>
<svg class="abs" style="left:621px;top:494.6px" width="12" height="7" viewBox="0 0 12 7"><rect x="0.4" y="0.4" width="8" height="6.2" rx="0.6" fill="#111"/><path d="M8.6 3.4 L11.4 0.8 L11.4 6.2Z" fill="#111"/></svg>
<span class="t" style="left:634.90px;top:494.60px;font-family:'Liberation Sans',sans-serif;font-size:7.4px;font-weight:normal;font-style:normal;color:#222;line-height:7.4px;transform:scaleX(0.9087);">Виртуальный визит</span>
<!-- ===== ui_3d ===== -->
<svg class="abs" style="left:25px;top:260.4px" width="688" height="223.6" viewBox="25 260.4 688 223.6"><defs>
<pattern id="wall" width="9" height="14" patternUnits="userSpaceOnUse" patternTransform="rotate(8)"><rect width="9" height="14" fill="#cbc6a9"/><ellipse cx="2.5" cy="4" rx="2.6" ry="4.6" fill="#b9b38f" opacity=".32"/><ellipse cx="7" cy="11" rx="2.4" ry="4.2" fill="#d6d1b6" opacity=".35"/></pattern>
<pattern id="wood" width="40" height="5" patternUnits="userSpaceOnUse" patternTransform="rotate(-42)"><rect width="40" height="5" fill="#b5936a"/><rect y="0" width="40" height="1" fill="#a78558" opacity=".4"/><rect y="2.6" width="40" height="0.9" fill="#c2a078" opacity=".45"/></pattern>
<pattern id="tile" width="6" height="3" patternUnits="userSpaceOnUse" patternTransform="rotate(-21)"><rect width="6" height="3" fill="#e4945a"/><rect width="6" height="0.5" fill="#cf8148" opacity=".5"/></pattern>
<pattern id="dk" width="12" height="40" patternUnits="userSpaceOnUse" patternTransform="rotate(4)"><rect width="12" height="40" fill="#34322a"/><rect x="0" width="5" height="40" fill="#3e3c32" opacity=".45"/></pattern>
<linearGradient id="yl" x1="0" y1="0" x2="1" y2="0"><stop offset="0" stop-color="#d2ad4e"/><stop offset="1" stop-color="#dcb956"/></linearGradient>
<filter id="fwall" x="-2%" y="-2%" width="104%" height="104%" color-interpolation-filters="sRGB"><feTurbulence type="fractalNoise" baseFrequency="0.11 0.07" numOctaves="2" seed="7" result="n"/><feColorMatrix in="n" type="matrix" values="0.30 0 0 0 0.645  0.30 0 0 0 0.625  0.30 0 0 0 0.505  0 0 0 0 1" result="c"/><feComposite in="c" in2="SourceGraphic" operator="in"/></filter>
<filter id="fdark" x="-2%" y="-2%" width="104%" height="104%" color-interpolation-filters="sRGB"><feTurbulence type="fractalNoise" baseFrequency="0.10 0.02" numOctaves="2" seed="11" result="n"/><feColorMatrix in="n" type="matrix" values="0.07 0 0 0 0.17  0.07 0 0 0 0.162  0.06 0 0 0 0.132  0 0 0 0 1" result="c"/><feComposite in="c" in2="SourceGraphic" operator="in"/></filter>
<pattern id="ypl" width="30" height="2.6" patternUnits="userSpaceOnUse" patternTransform="rotate(-37)"><rect width="30" height="2.6" fill="#d8b450"/><rect width="30" height="0.6" fill="#c29a3c" opacity=".55"/></pattern>
<pattern id="bh" width="30" height="2.4" patternUnits="userSpaceOnUse" patternTransform="rotate(18)"><rect width="30" height="2.4" fill="#473f33"/><rect width="30" height="0.7" fill="#2e2820" opacity=".7"/></pattern>
<pattern id="wl" width="40" height="4" patternUnits="userSpaceOnUse" patternTransform="rotate(-44)"><rect width="40" height="4" fill="#cdaa7e"/><rect width="40" height="0.8" fill="#b8956a" opacity=".4"/></pattern>
</defs><polygon points="202.0,348.0 443.0,470.0 444.0,490.0 360.0,490.0 213.0,401.0" fill="url(#wood)" /><polygon points="202.0,348.0 443.0,470.0 444.0,490.0 360.0,490.0 213.0,401.0" fill="#b8946c" opacity=".25"/><polygon points="202.0,348.4 207.4,351.0 218.4,404.4 213.0,401.0" fill="#dcdcdc" /><polygon points="207.0,351.0 240.4,368.0 242.0,398.0 219.0,404.4" fill="#cbc6a9"  filter="url(#fwall)"/><polygon points="207.0,351.0 240.4,368.0 242.0,398.0 219.0,404.4" fill="#bdb79a" opacity=".35"/><polygon points="240.0,368.4 278.4,387.6 281.6,428.0 242.0,398.0" fill="#cb9166" /><polyline points="256.4,377.0 259.0,409.0" fill="none" stroke="#dcae8a" stroke-width="1.2" stroke-linecap="round" stroke-linejoin="round" opacity=".8"/><polyline points="261.0,379.0 264.0,414.0" fill="none" stroke="#dcae8a" stroke-width="1.0" stroke-linecap="round" stroke-linejoin="round" opacity=".7"/><polygon points="223.7,362.6 238.8,367.4 239.0,373.7 228.5,378.7 224.4,376.4" fill="#e6e6e6" /><polygon points="222.4,390.3 232.6,384.5 235.4,398.8 224.4,404.6" fill="#e8e8e8" /><polygon points="216.9,387.2 227.1,381.7 232.6,384.5 222.4,390.3" fill="#b4b4b4" /><polygon points="216.9,387.2 222.4,390.3 224.4,405.1 218.3,401.8" fill="#4c4c4c" /><polygon points="219.9,386.2 227.6,382.7 230.3,384.0 222.6,387.9" fill="#8a8a8a" opacity=".6"/><polygon points="248.0,409.0 262.0,400.4 266.4,406.0 267.6,423.0 258.0,417.6" fill="#dcdcdc" /><polygon points="262.4,400.0 265.2,400.0 267.6,424.4 264.8,424.4" fill="#b8b8b8" /><polygon points="273.0,420.0 282.0,418.8 285.2,432.4 276.4,429.2" fill="#d4d4d4" /><polygon points="281.5,404.5 302.0,413.5 305.0,454.0 286.0,443.5" fill="#70401f" /><polygon points="283.5,407.5 300.0,415.0 302.6,450.5 287.6,442.0" fill="#3a2012" /><polyline points="302.6,404.0 307.4,457.0" fill="none" stroke="#66645e" stroke-width="2" stroke-linecap="round" stroke-linejoin="round" /><polygon points="305.0,406.0 323.0,413.0 327.0,465.0 309.0,457.6" fill="#cbc6a9"  filter="url(#fwall)"/><polygon points="323.0,413.0 328.0,415.0 330.6,467.0 326.6,465.0" fill="#b89274" /><polygon points="328.0,416.0 356.0,428.0 356.0,447.0 334.0,467.0 330.6,467.0" fill="#cbc6a9"  filter="url(#fwall)"/><polygon points="356.0,429.0 362.0,432.0 362.0,440.0 356.0,447.0" fill="#c79a3e" /><polygon points="360.6,434.0 364.0,435.4 364.0,438.6 360.6,438.0" fill="#f4f4f4" /><polygon points="191.0,293.0 450.0,401.0 445.4,470.6 202.0,348.0" fill="url(#wood)" /><polygon points="309.0,300.0 445.0,300.0 543.0,325.0 501.0,357.4 449.6,401.2 380.0,371.0 381.0,315.0 321.0,348.0 318.0,329.0" fill="#34322a"  filter="url(#fdark)"/><polygon points="381.0,310.0 402.4,310.0 402.4,320.4 382.0,316.4" fill="#cbc6a9"  filter="url(#fwall)"/><polygon points="190.7,292.8 300.0,254.2 300.0,306.0 203.0,346.5" fill="#cbc6a9"  filter="url(#fwall)"/><polygon points="267.6,272.4 290.0,264.4 291.6,285.2 270.0,293.0" fill="#ededed" /><polyline points="280.4,268.4 282.0,282.0" fill="none" stroke="#3b3b3b" stroke-width="1.0" stroke-linecap="round" stroke-linejoin="round" /><polyline points="287.4,266.0 289.4,284.4" fill="none" stroke="#3b3b3b" stroke-width="1.0" stroke-linecap="round" stroke-linejoin="round" /><polygon points="251.0,274.0 302.0,290.0 302.0,310.0 291.0,304.0 264.4,292.2 253.0,293.0" fill="#34322a"  filter="url(#fdark)"/><polygon points="274.5,294.3 292.6,287.9 292.6,301.8 289.7,302.0" fill="#cbc6a9"  filter="url(#fwall)"/><polygon points="211.6,294.4 239.6,284.4 241.6,312.0 217.0,324.0" fill="#eeeeee" /><polyline points="227.2,289.2 230.0,305.2" fill="none" stroke="#3b3b3b" stroke-width="1.1" stroke-linecap="round" stroke-linejoin="round" /><polyline points="236.0,286.4 238.8,300.4" fill="none" stroke="#3b3b3b" stroke-width="1.1" stroke-linecap="round" stroke-linejoin="round" /><polygon points="264.4,292.2 291.6,304.0 291.0,304.4 255.0,318.4" fill="#4b2d1b" /><polygon points="230.0,307.6 264.4,292.2 266.0,310.4 255.0,318.4 242.0,316.0" fill="url(#tile)" /><polygon points="255.0,318.0 291.0,303.6 292.0,318.4 274.4,326.4 270.0,325.2" fill="url(#tile)" /><polygon points="291.0,303.6 302.0,308.0 302.0,314.0 291.8,318.4" fill="#46423a" /><polygon points="274.4,326.0 316.0,309.0 319.4,329.4 300.0,340.0" fill="#cbc6a9"  filter="url(#fwall)"/><polygon points="331.6,312.0 348.4,319.0 348.4,330.4 335.0,338.6" fill="#8b5527" /><polygon points="335.0,316.0 346.0,320.4 346.0,330.0 337.0,335.4" fill="#2f2f33" /><polyline points="356.4,322.0 357.2,327.2" fill="none" stroke="#8a8a88" stroke-width="0.9" stroke-linecap="round" stroke-linejoin="round" /><polygon points="193.0,294.0 230.4,308.6 232.4,337.0 203.0,346.5" fill="#cbc6a9"  filter="url(#fwall)"/><polygon points="193.0,294.0 230.4,308.6 232.4,337.0 203.0,346.5" fill="#c4bea2" opacity=".35"/><polygon points="214.6,303.6 230.0,309.2 231.2,317.2 217.2,324.0" fill="#dedede" /><polygon points="203.0,346.6 232.4,337.0 235.6,365.0 202.6,348.4" fill="#b78c60" /><polygon points="189.6,293.0 193.2,294.6 203.4,347.6 200.6,348.4" fill="#d6d6d6" /><polygon points="230.2,308.4 271.0,326.2 275.0,345.0 281.0,390.4 235.4,364.8" fill="#cb9166" /><polyline points="253.0,320.0 256.4,376.0" fill="none" stroke="#ddb08c" stroke-width="1.4" stroke-linecap="round" stroke-linejoin="round" opacity=".45"/><polyline points="259.6,323.0 263.0,380.0" fill="none" stroke="#ddb08c" stroke-width="1.0" stroke-linecap="round" stroke-linejoin="round" opacity=".4"/><polygon points="270.6,326.0 300.4,338.6 297.6,350.0 275.0,343.0" fill="#cbc6a9"  filter="url(#fwall)"/><polygon points="274.6,341.4 295.6,349.0 298.4,398.6 280.8,390.4" fill="#6c3c1c" /><polygon points="276.8,344.6 293.8,350.8 296.4,395.0 282.4,388.4" fill="#3a2012" /><polyline points="281.4,390.4 298.2,398.4" fill="none" stroke="#e8e4dc" stroke-width="1.4" stroke-linecap="round" stroke-linejoin="round" /><polygon points="297.0,338.6 318.0,329.0 324.0,391.0 303.0,400.6" fill="#cbc6a9"  filter="url(#fwall)"/><polygon points="318.0,329.0 320.6,330.4 321.6,349.0 319.4,348.0" fill="#c2bc9d" /><polygon points="321.0,348.0 381.0,315.0 380.0,371.0 327.0,412.0" fill="#cbc6a9"  filter="url(#fwall)"/><polygon points="356.2,343.0 373.4,334.2 373.0,379.6 358.0,388.4" fill="#cf963e" /><polygon points="359.6,345.0 370.0,339.6 370.0,377.0 360.6,383.0" fill="#efefef" /><polyline points="364.8,342.6 365.4,380.0" fill="none" stroke="#d8b684" stroke-width="0.7" stroke-linecap="round" stroke-linejoin="round" /><polygon points="320.2,351.2 324.0,352.8 327.6,412.0 323.8,410.4" fill="#c6a486" /><polygon points="327.0,412.0 380.0,371.0 449.6,401.2 445.4,470.6" fill="url(#wood)" /><polyline points="296.6,339.6 302.6,398.6" fill="none" stroke="#696964" stroke-width="2.5" stroke-linecap="round" stroke-linejoin="round" /><polyline points="322.0,350.0 325.6,410.0" fill="none" stroke="#77756e" stroke-width="1.0" stroke-linecap="round" stroke-linejoin="round" /><polygon points="191.0,292.4 449.6,401.6 444.0,490.0 360.0,490.0 213.0,401.0" fill="#8c8c98" opacity=".09"/><polygon points="443.0,472.0 491.4,426.6 486.0,490.0 443.0,490.0" fill="url(#wl)" /><polygon points="455.0,468.0 479.0,445.6 478.0,478.0 456.0,490.0" fill="#f4f4f4" /><polygon points="459.0,469.0 467.0,462.0 466.0,483.0 459.0,488.0" fill="#3c3a34" /><polygon points="469.0,460.0 477.0,452.6 476.0,474.6 468.0,481.0" fill="#3c3a34" /><polygon points="490.0,423.0 494.0,420.0 530.0,433.0 521.0,440.0 504.0,461.0 487.0,461.0" fill="url(#ypl)" /><polygon points="498.0,430.0 512.4,436.0 509.0,452.6 498.0,450.0" fill="#f2f2f2" /><polygon points="500.4,432.6 504.0,434.0 503.4,448.0 500.4,447.0" fill="#4a4438" /><polygon points="506.0,435.0 510.0,436.6 508.0,449.6 505.4,449.0" fill="#4a4438" /><polygon points="520.0,438.0 538.0,426.0 552.4,432.0 546.0,451.6" fill="url(#bh)" /><polygon points="488.0,460.0 520.0,439.6 548.0,452.0 518.0,471.4" fill="#b8966c" /><polygon points="486.0,460.0 518.0,473.0 516.0,490.0 484.0,490.0" fill="#c49b6a" /><polygon points="518.0,473.0 548.0,453.0 524.0,490.0 516.0,490.0" fill="#d0aa7c" /><polyline points="487.0,460.0 518.0,472.4 548.0,453.0 552.6,432.4" fill="none" stroke="#7c7a76" stroke-width="1.8" stroke-linecap="round" stroke-linejoin="round" /><polyline points="538.0,426.0 552.6,432.4" fill="none" stroke="#6c6a66" stroke-width="1.4" stroke-linecap="round" stroke-linejoin="round" /><polygon points="445.0,469.0 492.0,422.0 494.6,426.4 447.6,475.0" fill="#8d8a84" /><polygon points="449.6,401.0 462.0,398.0 500.6,359.0 492.0,423.0 445.6,469.6" fill="url(#wl)" /><polygon points="464.0,397.0 488.0,377.0 489.0,414.4 462.0,434.6" fill="#f6f6f6" /><polygon points="467.2,400.0 475.4,393.0 474.4,420.0 466.6,426.4" fill="#3c3a34" /><polygon points="477.6,391.0 486.0,383.6 486.0,411.0 476.6,419.0" fill="#3c3a34" /><polygon points="489.0,377.2 500.4,358.4 500.4,397.2 494.4,400.0 494.4,419.6 489.0,414.8" fill="#7f7c74" /><polygon points="500.6,360.0 544.0,327.0 531.4,386.0 497.6,398.6" fill="url(#ypl)" /><polygon points="510.0,358.0 532.6,341.0 529.0,377.6 508.0,390.4" fill="#f6f6f6" /><polygon points="513.0,360.4 522.0,352.6 520.0,379.0 511.8,385.4" fill="#44423a" /><polygon points="524.6,350.0 531.0,344.6 528.0,374.0 522.6,378.4" fill="#44423a" /><polygon points="536.0,361.0 567.0,371.0 560.0,393.6 531.0,386.0" fill="url(#bh)" /><polygon points="498.0,397.4 530.6,386.0 560.0,394.0 532.0,409.6" fill="#b8966c" /><polygon points="497.0,398.0 531.0,410.0 529.0,434.4 494.0,421.4" fill="#c8a06c" /><polygon points="497.0,398.0 508.0,402.0 506.0,426.0 494.0,421.4" fill="#d2b060" opacity=".6"/><polygon points="531.0,410.0 560.6,395.4 557.6,402.0 529.0,434.4" fill="#d3ae80" /><polygon points="564.4,369.6 568.4,371.4 562.0,396.0 558.6,394.0" fill="#7a7874" /><polyline points="536.0,360.4 567.0,370.6" fill="none" stroke="#6a6864" stroke-width="1.6" stroke-linecap="round" stroke-linejoin="round" /><polyline points="497.6,397.6 531.0,409.6 560.0,395.0" fill="none" stroke="#807e7a" stroke-width="2.0" stroke-linecap="round" stroke-linejoin="round" /><polygon points="449.6,401.0 490.0,370.0 501.0,357.0 543.0,324.6 545.6,327.0 503.6,360.0 464.0,397.4 462.0,408.6" fill="#74726e" /><polyline points="190.7,292.8 300.0,254.2" fill="none" stroke="#4e4d49" stroke-width="2.3" stroke-linecap="round" stroke-linejoin="round" /><polyline points="251.0,273.6 302.0,289.6" fill="none" stroke="#63625e" stroke-width="2.3" stroke-linecap="round" stroke-linejoin="round" /><polyline points="230.0,307.6 264.4,292.2 302.0,307.6" fill="none" stroke="#63625e" stroke-width="2.3" stroke-linecap="round" stroke-linejoin="round" /><polyline points="255.0,318.0 291.0,303.6" fill="none" stroke="#63625e" stroke-width="2.3" stroke-linecap="round" stroke-linejoin="round" /><polyline points="274.4,325.8 302.0,314.4" fill="none" stroke="#63625e" stroke-width="2.3" stroke-linecap="round" stroke-linejoin="round" /><polyline points="299.4,338.0 319.0,329.0" fill="none" stroke="#63625e" stroke-width="2.3" stroke-linecap="round" stroke-linejoin="round" /><polyline points="321.0,348.0 381.0,315.0 501.0,357.4" fill="none" stroke="#6c6a64" stroke-width="2.4" stroke-linecap="round" stroke-linejoin="round" /><polyline points="480.0,309.0 543.0,325.0" fill="none" stroke="#63625e" stroke-width="2.0" stroke-linecap="round" stroke-linejoin="round" /><polyline points="380.4,315.4 360.0,309.4" fill="none" stroke="#63625e" stroke-width="2.0" stroke-linecap="round" stroke-linejoin="round" /><polyline points="191.0,292.4 449.6,401.6" fill="none" stroke="#67656a" stroke-width="2.5" stroke-linecap="round" stroke-linejoin="round" /><polyline points="201.4,347.6 443.6,470.2" fill="none" stroke="#4a4843" stroke-width="3.0" stroke-linecap="round" stroke-linejoin="round" /><polyline points="213.0,401.0 352.0,485.0" fill="none" stroke="#4c4a46" stroke-width="1.6" stroke-linecap="round" stroke-linejoin="round" /><polyline points="449.8,401.4 445.4,470.0" fill="none" stroke="#b8946a" stroke-width="0.8" stroke-linecap="round" stroke-linejoin="round" /></svg>
<!-- ===== ui_right ===== -->
<div class="abs" style="left:713.00px;top:57.00px;width:197.00px;height:455.00px;background:#f0f0f0"></div>
<div class="abs" style="left:714.50px;top:63.70px;width:46.00px;height:14.30px;background:linear-gradient(180deg,#f2f2f2,#dcdcdc);border:1px solid #a9a9a9;border-bottom:none;border-radius:2px 2px 0 0"></div>
<div class="abs" style="left:809.00px;top:63.70px;width:47.00px;height:14.30px;background:linear-gradient(180deg,#f2f2f2,#dcdcdc);border:1px solid #a9a9a9;border-bottom:none;border-radius:2px 2px 0 0"></div>
<div class="abs" style="left:713.20px;top:78.00px;width:200.00px;height:440.00px;background:linear-gradient(90deg,#f0f0f0 0,#f0f0f0 2.4px,#fdfdfd 2.6px);border:1.2px solid #a4a4a4"></div>
<div class="abs" style="left:760.00px;top:59.30px;width:49.50px;height:19.70px;background:#fdfdfd;border:1px solid #a9a9a9;border-bottom:none;border-radius:2px 2px 0 0"></div>
<span class="t" style="left:726.50px;top:66.20px;font-family:'Liberation Sans',sans-serif;font-size:7.2px;font-weight:normal;font-style:normal;color:#222;line-height:7.2px;transform:scaleX(0.9499);">Проект</span>
<span class="t" style="left:775.50px;top:65.40px;font-family:'Liberation Sans',sans-serif;font-size:7.2px;font-weight:normal;font-style:normal;color:#111;line-height:7.2px;transform:scaleX(0.9197);">Этажи</span>
<span class="t" style="left:817.80px;top:66.20px;font-family:'Liberation Sans',sans-serif;font-size:7.2px;font-weight:normal;font-style:normal;color:#222;line-height:7.2px;transform:scaleX(0.9347);">Свойства</span>
<div class="abs" style="left:715.50px;top:79.50px;width:195.00px;height:16.30px;background:linear-gradient(180deg,#e4edf7 0,#d3e2f2 50%,#c3d7ee 100%);border-bottom:1px solid #b5c6da"></div>
<span class="t" style="left:722.70px;top:84.50px;font-family:'Liberation Sans',sans-serif;font-size:7.6px;font-weight:bold;font-style:normal;color:#111;line-height:7.6px;transform:scaleX(0.9814);">Список этажей</span>
<div class="abs" style="left:717.80px;top:99.20px;width:186.00px;height:137.60px;background:#ffffff;border:1px solid #a6a6a6"></div>
<div class="abs" style="left:719.00px;top:100.60px;width:184.00px;height:17.90px;background:#0a7bf6"></div>
<div class="abs" style="left:719.00px;top:137.80px;width:184.00px;height:1.00px;background:#ececec"></div>
<svg class="abs" style="left:721.3px;top:104px" width="10" height="10" viewBox="0 0 10 10"><path d="M1 1.6 L7.2 0.8 L8.8 2 L8.8 8.6 L2.4 9.4 L1 8.2Z" fill="none" stroke="#e8f1ff" stroke-width="0.9"/><text x="5" y="7.4" text-anchor="middle" font-family="Liberation Sans,sans-serif" font-size="6.6" fill="#ffffff">2</text></svg>
<svg class="abs" style="left:721.3px;top:123.6px" width="10" height="10" viewBox="0 0 10 10"><path d="M1 1.6 L7.2 0.8 L8.8 2 L8.8 8.6 L2.4 9.4 L1 8.2Z" fill="none" stroke="#9a9a9a" stroke-width="0.9"/><text x="5" y="7.4" text-anchor="middle" font-family="Liberation Sans,sans-serif" font-size="6.6" fill="#777">1</text></svg>
<span class="t" style="left:735.50px;top:104.40px;font-family:'Liberation Sans',sans-serif;font-size:9px;font-weight:normal;font-style:normal;color:#ffffff;line-height:9px;transform:scaleX(0.8918);">Этаж №2</span>
<span class="t" style="left:735.50px;top:124.10px;font-family:'Liberation Sans',sans-serif;font-size:9px;font-weight:normal;font-style:normal;color:#222;line-height:9px;transform:scaleX(0.8918);">Этаж №1</span>
<div class="btn" style="left:718px;top:241px;width:88.5px;height:20.6px"></div>
<div class="btn" style="left:827.3px;top:241px;width:77.5px;height:20.6px"></div>
<svg class="abs" style="left:726px;top:246px" width="13" height="12" viewBox="0 0 13 12"><path d="M4 2 L8 0.6 L11.6 2.4 L11.6 7 L7.6 9 L4 7Z" fill="#58b84a" stroke="#2f8a2a" stroke-width="0.6"/><path d="M1 5.6 L4.6 4.4 L7.6 6 L7.6 10 L4.2 11.4 L1 9.8Z" fill="#7ed46a" stroke="#2f8a2a" stroke-width="0.6"/><path d="M9 7 L12.4 8.4 L9.6 11.4Z" fill="#b7dd9a"/></svg>
<span class="t" style="left:741.50px;top:247.80px;font-family:'Liberation Sans',sans-serif;font-size:7.6px;font-weight:bold;font-style:normal;color:#111;line-height:7.6px;transform:scaleX(0.9856);">Добавить этаж</span>
<svg class="abs" style="left:838.5px;top:246.5px" width="10" height="10" viewBox="0 0 10 10"><path d="M1.2 2.4 L2.6 1 L5 3.4 L7.4 1 L8.8 2.4 L6.4 5 L8.8 7.6 L7.4 9 L5 6.6 L2.6 9 L1.2 7.6 L3.6 5Z" fill="#e23a2c" stroke="#a81f16" stroke-width="0.6"/></svg>
<span class="t" style="left:849.80px;top:248.00px;font-family:'Liberation Sans',sans-serif;font-size:7.2px;font-weight:normal;font-style:normal;color:#222;line-height:7.2px;transform:scaleX(0.9785);">Удалить этаж</span>
<div class="abs" style="left:717.80px;top:273.00px;width:186.40px;height:42.40px;background:#f4f4f4;border:1px solid #e6e6e6"></div>
<div class="abs" style="left:719.50px;top:268.00px;width:61.00px;height:5.00px;background:#fdfdfd"></div>
<span class="t" style="left:720.60px;top:269.40px;font-family:'Liberation Sans',sans-serif;font-size:7.6px;font-weight:bold;font-style:normal;color:#111;line-height:7.6px;transform:scaleX(0.9679);">Дополнительно</span>
<div class="abs" style="left:723.60px;top:283.20px;width:7.60px;height:7.60px;background:#fdfdfd;border:1px solid #8e8f8f"></div>
<svg class="abs" style="left:724.4px;top:284px" width="6" height="6" viewBox="0 0 6 6"><path d="M0.8 3 L2.4 4.8 L5.2 0.8" fill="none" stroke="#3b4a8c" stroke-width="1.2"/></svg>
<span class="t" style="left:735.20px;top:282.70px;font-family:'Liberation Sans',sans-serif;font-size:8.6px;font-weight:normal;font-style:normal;color:#222;line-height:8.6px;transform:scaleX(0.9363);">Показывать все этажи на 3D-обзоре</span>
<span class="t" style="left:723.60px;top:299.60px;font-family:'Liberation Sans',sans-serif;font-size:7.4px;font-weight:normal;font-style:normal;color:#222;line-height:7.4px;transform:scaleX(0.9689);">Толщина перекрытий:</span>
<div class="abs" style="left:826.00px;top:296.70px;width:77.00px;height:12.20px;background:#ffffff;border:1px solid #c4c4c4"></div>
<span class="t" style="left:829.60px;top:299.60px;font-family:'Liberation Sans',sans-serif;font-size:7.4px;font-weight:normal;font-style:normal;color:#222;line-height:7.4px;transform:scaleX(1.0112);">25,0 см</span>
<div class="abs" style="left:891.50px;top:297.60px;width:10.50px;height:5.00px;background:linear-gradient(#f6f6f6,#dcdcdc);border:1px solid #9a9a9a;border-radius:1px"></div>
<div class="abs" style="left:891.50px;top:303.00px;width:10.50px;height:5.00px;background:linear-gradient(#f6f6f6,#dcdcdc);border:1px solid #9a9a9a;border-radius:1px"></div>
<svg class="abs" style="left:894.5px;top:299px" width="5" height="8" viewBox="0 0 5 8"><path d="M0.4 2.2 L2.5 0.4 L4.6 2.2Z M0.4 5.8 L2.5 7.6 L4.6 5.8Z" fill="#333"/></svg>
<!-- ===== ui_dialog ===== -->
<div class="abs" style="left:296.30px;top:207.40px;width:246.40px;height:103.20px;background:linear-gradient(180deg,rgba(255,255,255,0) 0,rgba(255,255,255,0) 17px,#b9d2ec 18px),linear-gradient(90deg,#d3e2f2 0,#c2d9f0 22%,#a6cbf1 45%,#aacdf1 75%,#b9d4ef 100%);border:1px solid #596879;border-radius:4px;box-shadow:0 1px 7px 2px rgba(0,0,0,.55),0 0 2px rgba(0,0,0,.6)"></div>
<div class="abs" style="left:297.30px;top:208.40px;width:244.40px;height:101.20px;border:1px solid rgba(255,255,255,.55);border-radius:3px"></div>
<span class="t" style="left:301.00px;top:212.30px;font-family:'Liberation Sans',sans-serif;font-size:7.8px;font-weight:normal;font-style:normal;color:#1a1a1a;line-height:7.8px;transform:scaleX(0.8634);text-shadow:0 0 3px #fff,0 0 3px #fff;">Работа с этажами</span>
<div class="abs" style="left:510.80px;top:208.20px;width:27.20px;height:10.60px;background:linear-gradient(180deg,#e2a394 0,#d0644f 45%,#c0361e 50%,#cf5a3c 100%);border:1px solid #5a2a24;border-top:none;border-radius:0 0 3px 3px;box-shadow:inset 0 0 0 1px rgba(255,255,255,.35)"></div>
<svg class="abs" style="left:520.6px;top:210.3px" width="8" height="7" viewBox="0 0 8 7"><path d="M0.8 0.6 L2.6 0.6 L4 2.2 L5.4 0.6 L7.2 0.6 L5 3.5 L7.2 6.4 L5.4 6.4 L4 4.8 L2.6 6.4 L0.8 6.4 L3 3.5Z" fill="#ffffff" stroke="#6a3a38" stroke-width="0.5"/></svg>
<div class="abs" style="left:300.60px;top:224.80px;width:237.60px;height:80.00px;background:#f0f0f0;border:1px solid #7b8896"></div>
<div class="abs" style="left:301.60px;top:225.80px;width:235.60px;height:51.00px;background:#ffffff"></div>
<svg class="abs" style="left:312px;top:239px" width="20" height="20" viewBox="0 0 20 20"><defs><radialGradient id="ginf" cx="0.45" cy="0.3" r="0.8"><stop offset="0" stop-color="#5f8fe6"/><stop offset="0.55" stop-color="#2353c4"/><stop offset="1" stop-color="#123a9c"/></radialGradient></defs><circle cx="10" cy="10" r="9.3" fill="#dfe6f2" stroke="#b8c2d4" stroke-width="0.6"/><circle cx="10" cy="10" r="8.2" fill="url(#ginf)"/><circle cx="10" cy="5.6" r="1.5" fill="#fff"/><rect x="8.7" y="8.2" width="2.6" height="7.4" rx="0.6" fill="#fff"/></svg>
<span class="t" style="left:337.80px;top:241.50px;font-family:'Liberation Sans',sans-serif;font-size:7.6px;font-weight:normal;font-style:normal;color:#2a2f3c;line-height:7.6px;transform:scaleX(0.9429);">Для переключения между этажами, а также их</span>
<span class="t" style="left:337.80px;top:251.70px;font-family:'Liberation Sans',sans-serif;font-size:7.6px;font-weight:normal;font-style:normal;color:#2a2f3c;line-height:7.6px;transform:scaleX(0.9335);">редактирования, используйте вкладку &quot;Этажи&quot; справа.</span>
<div class="abs" style="left:487.70px;top:283.00px;width:46.20px;height:15.60px;background:linear-gradient(180deg,#f4f4f4 0,#ececec 48%,#dedede 52%,#d2d2d2 100%);border:1px solid #3c7fb1;border-radius:2px;box-shadow:inset 0 0 0 1px #48d8fb55, inset 0 0 0 1px rgba(120,215,250,.8)"></div>
<span class="t" style="left:506.50px;top:287.30px;font-family:'Liberation Sans',sans-serif;font-size:7.8px;font-weight:normal;font-style:normal;color:#111;line-height:7.8px;transform:scaleX(0.9320);">OK</span>
<div class="abs" style="left:0.00px;top:510.70px;width:910.00px;height:1.30px;background:#7f8b97"></div>
</body>
</html>
